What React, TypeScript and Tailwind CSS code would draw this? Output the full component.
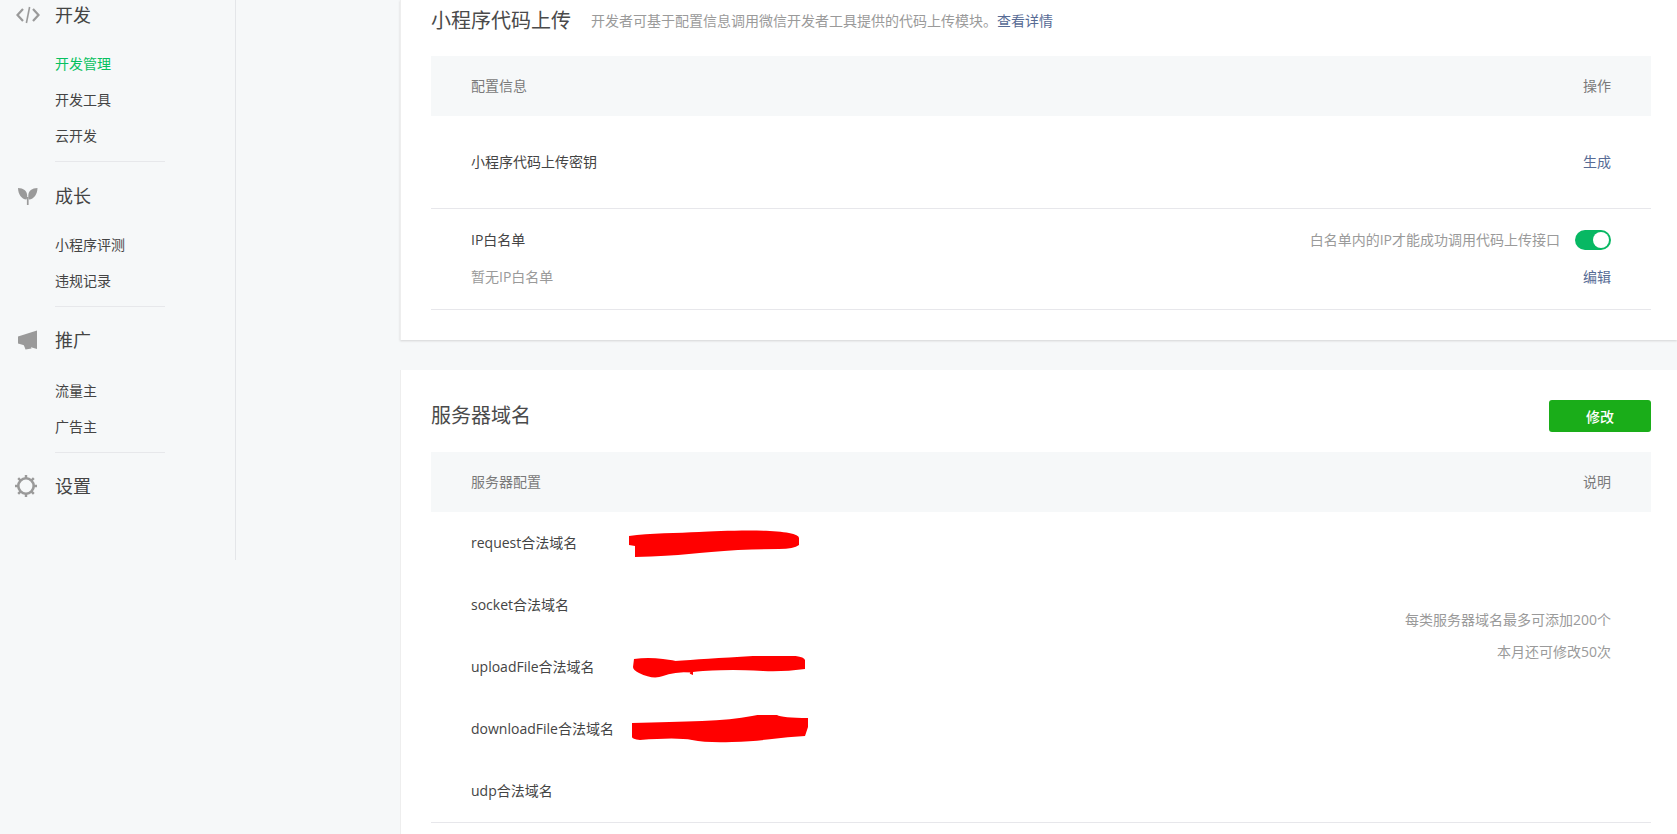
const NAV = [
  { title: "开发", icon: "code", items: ["开发管理", "开发工具", "云开发"], gap: "mt-4", after: "mb-[19px]" },
  { title: "成长", icon: "leaf", items: ["小程序评测", "违规记录"], gap: "mt-4", after: "mb-[18px]" },
  { title: "推广", icon: "horn", items: ["流量主", "广告主"], gap: "mt-[18px]", after: "mb-[18px]" },
];

const SERVER_ROWS = [
  { label: "request合法域名", mark: "request" },
  { label: "socket合法域名" },
  { label: "uploadFile合法域名", mark: "upload" },
  { label: "downloadFile合法域名", mark: "download" },
  { label: "udp合法域名" },
];

const NavIcon = ({ name }: { name: string }) => {
  if (name === "code") {
    return (
      <svg width="24" height="18" viewBox="0 0 24 18" fill="none" stroke="#9a9a9a" strokeWidth="2.2">
        <path d="M7 3 1.5 9 7 15" />
        <path d="M17 3l5.5 6-5.5 6" />
        <path d="M13.6 1 10.4 17" strokeWidth="1.6" />
      </svg>
    );
  }
  if (name === "leaf") {
    return (
      <svg width="20" height="17" viewBox="0 0 20 17" fill="#9a9a9a">
        <path d="M0 0c5.500.3 9 2.500 9.200 7.500.1 1.500-.2 3-.8 4C3.500 11 .2 6.500 0 0z" />
        <path d="M19.500 0c-5.500.3-9 2.500-9.200 7.500-.1 1.500.2 3 .8 4 4.900-.5 8.200-5 8.400-11.500z" />
        <rect x="8.900" y="9" width="1.700" height="8" />
      </svg>
    );
  }
  if (name === "horn") {
    return (
      <svg width="20" height="20" viewBox="0 0 20 20" fill="#9a9a9a">
        <path d="M0 6.500 19 .5V19L0 13.500z" />
        <path d="M5 13l7 2 1.500 3.500-6 1z" />
      </svg>
    );
  }
  return (
    <svg width="22" height="22" viewBox="0 0 22 22" fill="none" stroke="#9a9a9a">
      <circle cx="11" cy="11" r="7.700" strokeWidth="2.600" />
      <path
        d="M11 0v3M11 19v3M0 11h3M19 11h3M3.200 3.200l2.200 2.200M16.600 16.600l2.200 2.200M3.200 18.800l2.200-2.200M16.600 5.400l2.200-2.200"
        strokeWidth="2.400"
      />
    </svg>
  );
};

const RedMark = ({ kind }: { kind: string }) => {
  if (kind === "request") {
    return (
      <svg width="172" height="27" viewBox="0 0 172 27" fill="#ff0000" className="-ml-[2px]">
        <path d="M0 6C20 3 50 3 70 2S140-1 160 3Q170 5 170 8V15Q165 19 150 19T109 20Q80 22 60 24T6 27V16L0 15z" />
      </svg>
    );
  }
  if (kind === "upload") {
    return (
      <svg width="172" height="22" viewBox="0 0 172 22" fill="#ff0000" className="ml-[2px]">
        <path d="M1 3Q15 1 30 3T42 5Q70 3 120 0T172 4V13Q150 16 130 15T100 14 70 15 60 19V16Q40 16 30 20T6 17Q0 14 0 11z" />
      </svg>
    );
  }
  return (
    <svg width="176" height="28" viewBox="0 0 176 28" fill="#ff0000" className="ml-[1px]">
      <path d="M0 8Q40 7 70 6T120 1 145 0 176 3V12L173 21Q155 22 140 24T100 27 60 25 8 25Q0 24 0 22z" />
    </svg>
  );
};

const Sidebar = () => (
  <div className="w-[236px] h-[560px] shrink-0 border-r border-[#e4e6e9]">
    {NAV.map((group) => (
      <div key={group.title}>
        <div className="h-[30px] flex items-center">
          <div className="w-[55px] flex justify-center pl-[1px] pr-[1px]">
            <NavIcon name={group.icon} />
          </div>
          <span className="text-lg text-[#444444]">{group.title}</span>
        </div>
        <div className={group.gap}>
          {group.items.map((item) => (
            <div
              key={item}
              className={`h-9 pl-[55px] flex items-center text-sm ${
                item === "开发管理" ? "text-[#07c160]" : "text-[#444444]"
              }`}
            >
              {item}
            </div>
          ))}
        </div>
        <div className={`ml-[55px] w-[110px] h-px bg-[#e7e8eb] mt-[7px] ${group.after}`}></div>
      </div>
    ))}
    <div className="h-[30px] flex items-center">
      <div className="w-[55px] flex justify-center pr-[3px]">
        <NavIcon name="gear" />
      </div>
      <span className="text-lg text-[#444444]">设置</span>
    </div>
  </div>
);

const TableHead = ({ left, right }: { left: string; right: string }) => (
  <div className="h-[60px] bg-[#f6f8f9] px-10 flex items-center justify-between text-sm text-[#7a7a7a]">
    <span>{left}</span>
    <span>{right}</span>
  </div>
);

const UploadCard = () => (
  <div className="h-[340px] bg-white pl-[30px] pr-[26px] border-l border-[#eeeeee] shadow-[0_1px_2px_rgba(150,150,150,0.35)]">
    <div className="h-[56px] pb-[14px] flex items-center">
      <h2 className="text-xl font-normal text-[#4a4a4a]">小程序代码上传</h2>
      <p className="ml-5 text-sm text-[#9a9a9a]">
        开发者可基于配置信息调用微信开发者工具提供的代码上传模块。
        <a className="text-[#576b95]">查看详情</a>
      </p>
    </div>
    <TableHead left="配置信息" right="操作" />
    <div className="h-[93px] px-10 flex items-center justify-between text-sm border-b border-[#e7e7eb]">
      <span className="text-[#444444]">小程序代码上传密钥</span>
      <a className="text-[#576b95]">生成</a>
    </div>
    <div className="h-[101px] px-10 pt-[21px] border-b border-[#e7e7eb] text-sm">
      <div className="h-5 flex items-center justify-between">
        <span className="text-[#444444]">IP白名单</span>
        <div className="flex items-center">
          <span className="text-[#9a9a9a]">白名单内的IP才能成功调用代码上传接口</span>
          <div className="ml-[15px] w-9 h-5 rounded-full bg-[#07b863] flex items-center justify-end pr-[2px]">
            <div className="w-4 h-4 rounded-full bg-white"></div>
          </div>
        </div>
      </div>
      <div className="mt-[17px] h-5 flex items-center justify-between">
        <span className="text-[#9a9a9a]">暂无IP白名单</span>
        <a className="text-[#576b95]">编辑</a>
      </div>
    </div>
  </div>
);

const ServerCard = () => (
  <div className="mt-[30px] bg-white pl-[30px] pr-[26px] border-l border-[#eeeeee] pb-10">
    <div className="h-[82px] pt-[30px] pb-5 flex items-center justify-between">
      <h2 className="text-xl font-normal text-[#4a4a4a]">服务器域名</h2>
      <button className="w-[102px] h-8 pt-[1px] rounded-[3px] bg-[#1aad19] text-white text-sm font-medium">修改</button>
    </div>
    <TableHead left="服务器配置" right="说明" />
    <div className="flex justify-between border-b border-[#e7e7eb] h-[311px] px-10">
      <div>
        {SERVER_ROWS.map((row) => (
          <div key={row.label} className="h-[62px] flex items-center text-sm text-[#444444]">
            <span className="w-[160px] shrink-0">{row.label}</span>
            {row.mark && <RedMark kind={row.mark} />}
          </div>
        ))}
      </div>
      <div className="pt-[92px] text-sm leading-8 text-right text-[#9a9a9a]">
        <p>每类服务器域名最多可添加200个</p>
        <p>本月还可修改50次</p>
      </div>
    </div>
  </div>
);

export default function App() {
  return (
    <div className="w-[1677px] h-[834px] overflow-hidden bg-[#f6f8f9] flex font-['Open_Sans','Noto_Sans_CJK_SC',sans-serif]">
      <Sidebar />
      <div className="ml-[164px] flex-1">
        <UploadCard />
        <ServerCard />
      </div>
    </div>
  );
}
